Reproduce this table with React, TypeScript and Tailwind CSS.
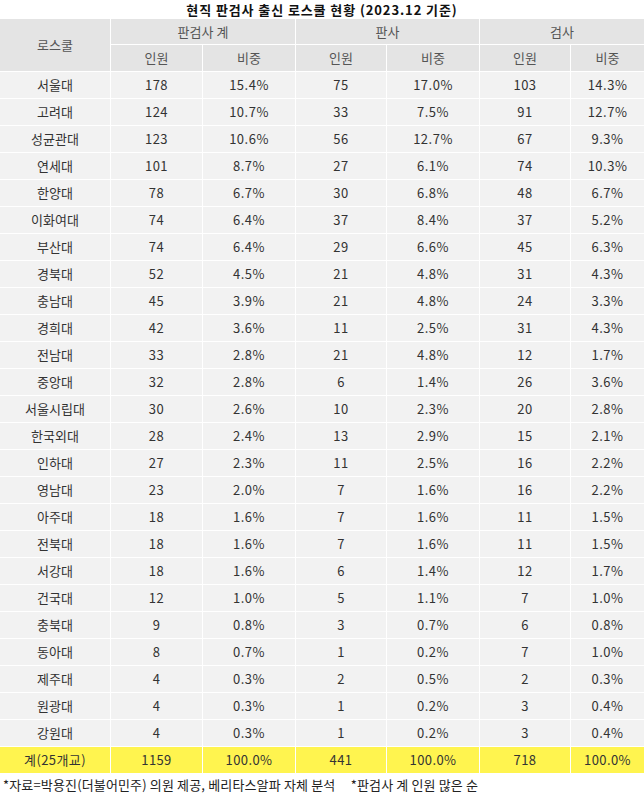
import React from "react";

const rows: [string, string, string, string, string, string, string][] = [
  ["서울대", "178", "15.4%", "75", "17.0%", "103", "14.3%"],
  ["고려대", "124", "10.7%", "33", "7.5%", "91", "12.7%"],
  ["성균관대", "123", "10.6%", "56", "12.7%", "67", "9.3%"],
  ["연세대", "101", "8.7%", "27", "6.1%", "74", "10.3%"],
  ["한양대", "78", "6.7%", "30", "6.8%", "48", "6.7%"],
  ["이화여대", "74", "6.4%", "37", "8.4%", "37", "5.2%"],
  ["부산대", "74", "6.4%", "29", "6.6%", "45", "6.3%"],
  ["경북대", "52", "4.5%", "21", "4.8%", "31", "4.3%"],
  ["충남대", "45", "3.9%", "21", "4.8%", "24", "3.3%"],
  ["경희대", "42", "3.6%", "11", "2.5%", "31", "4.3%"],
  ["전남대", "33", "2.8%", "21", "4.8%", "12", "1.7%"],
  ["중앙대", "32", "2.8%", "6", "1.4%", "26", "3.6%"],
  ["서울시립대", "30", "2.6%", "10", "2.3%", "20", "2.8%"],
  ["한국외대", "28", "2.4%", "13", "2.9%", "15", "2.1%"],
  ["인하대", "27", "2.3%", "11", "2.5%", "16", "2.2%"],
  ["영남대", "23", "2.0%", "7", "1.6%", "16", "2.2%"],
  ["아주대", "18", "1.6%", "7", "1.6%", "11", "1.5%"],
  ["전북대", "18", "1.6%", "7", "1.6%", "11", "1.5%"],
  ["서강대", "18", "1.6%", "6", "1.4%", "12", "1.7%"],
  ["건국대", "12", "1.0%", "5", "1.1%", "7", "1.0%"],
  ["충북대", "9", "0.8%", "3", "0.7%", "6", "0.8%"],
  ["동아대", "8", "0.7%", "1", "0.2%", "7", "1.0%"],
  ["제주대", "4", "0.3%", "2", "0.5%", "2", "0.3%"],
  ["원광대", "4", "0.3%", "1", "0.2%", "3", "0.4%"],
  ["강원대", "4", "0.3%", "1", "0.2%", "3", "0.4%"],
];

const total = ["계(25개교)", "1159", "100.0%", "441", "100.0%", "718", "100.0%"];

const font = { fontFamily: '"Noto Sans CJK KR", "Noto Sans", sans-serif' };

export default function App() {
  return (
    <div className="w-[644px] h-[802px] bg-white text-[13px]" style={font}>
      <div className="h-[19px] flex items-center justify-center font-bold text-[13px] tracking-[0.9px] text-[#111] leading-none">
        현직 판검사 출신 로스쿨 현황 (2023.12 기준)
      </div>
      <div className="grid grid-cols-[110px_91px_92px_90px_92px_90px_1fr] grid-rows-[25px_26px] gap-px bg-white">
        <div className="row-span-2 bg-[#e4e4e4] flex items-center justify-center text-[#555]">로스쿨</div>
        <div className="col-span-2 bg-[#e4e4e4] flex items-center justify-center text-[#555]">판검사 계</div>
        <div className="col-span-2 bg-[#e4e4e4] flex items-center justify-center text-[#555]">판사</div>
        <div className="col-span-2 bg-[#e4e4e4] flex items-center justify-center text-[#555]">검사</div>
        {["인원", "비중", "인원", "비중", "인원", "비중"].map((t, i) => (
          <div key={i} className="bg-[#e4e4e4] flex items-center justify-center text-[#555]">
            {t}
          </div>
        ))}
      </div>
      <div className="grid grid-cols-[110px_91px_92px_90px_92px_90px_1fr] auto-rows-[26px] gap-px bg-white pt-px">
        {rows.map((r, ri) =>
          r.map((c, ci) => (
            <div
              key={`${ri}-${ci}`}
              className={`bg-[#f2f2f2] flex items-center justify-center text-[#333] ${ci === 0 ? "" : "tracking-[0.5px]"}`}
            >
              {c}
            </div>
          ))
        )}
        {total.map((c, ci) => (
          <div key={`t-${ci}`} className="bg-[#fff44f] flex items-center justify-center text-[#333] tracking-[0.4px]">
            {c}
          </div>
        ))}
      </div>
      <div className="pl-[3px] pt-[2px] text-[13px] tracking-[0.15px] text-[#222] whitespace-pre">
        {"*자료=박용진(더불어민주) 의원 제공, 베리타스알파 자체 분석     *판검사 계 인원 많은 순"}
      </div>
    </div>
  );
}
